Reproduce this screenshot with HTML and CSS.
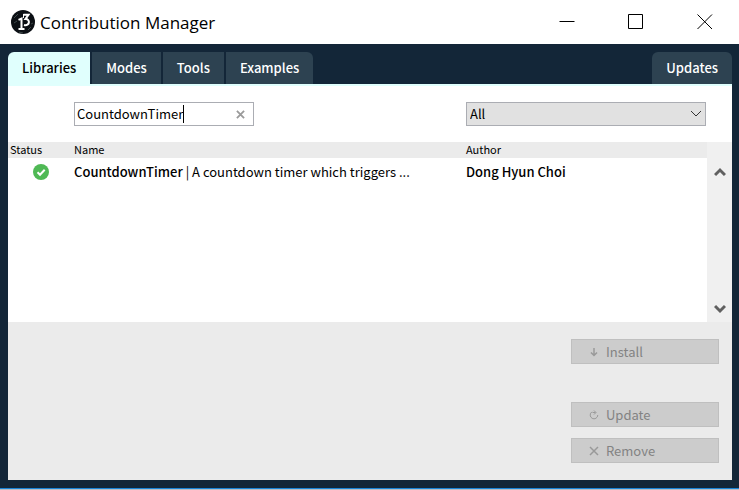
FILE: index.html
```html
<!DOCTYPE html>
<html lang="en">
<head>
<meta charset="utf-8">
<title>Contribution Manager</title>
<link rel="stylesheet" href="styles.css">
</head>
<body>
<header class="titlebar">
  <svg class="logo" viewBox="0 0 24 24" aria-hidden="true">
    <circle cx="12" cy="12" r="12" fill="#0b0f14"/>
    <path d="M3 8l4-4M3 13l3-2M17 20l3-3M20 14l2-1M8 22l4 1" stroke="#3c4748" stroke-width="1" fill="none"/>
    <path d="M7.500 9.800l3-1.300v10M7.500 19h6" stroke="#fff" stroke-width="2" fill="none"/>
    <path d="M12.500 4.800h5l-3 4.200c5-.2 4.500 7.500-1.500 6" stroke="#fff" stroke-width="2" fill="none"/>
    <path d="M12.500 4v4" stroke="#fff" stroke-width="1" fill="none"/>
  </svg>
  <h1 class="title">Contribution Manager</h1>
  <div class="window-controls">
    <button class="window-button" type="button" aria-label="Minimize"><svg viewBox="0 0 16 16"><path d="M.5 7.500h15"/></svg></button>
    <button class="window-button" type="button" aria-label="Maximize"><svg viewBox="0 0 16 16"><path d="M.5.500h14v14H.5z"/></svg></button>
    <button class="window-button" type="button" aria-label="Close"><svg viewBox="0 0 16 16"><path d="M.5.500l14.500 14.500M15 .500L.5 15"/></svg></button>
  </div>
</header>
<main class="frame">
  <nav class="tabs">
    <button class="tab tab-active" type="button">Libraries</button>
    <button class="tab" type="button">Modes</button>
    <button class="tab" type="button">Tools</button>
    <button class="tab tab-last" type="button">Examples</button>
    <button class="tab tab-updates" type="button">Updates</button>
  </nav>
  <section class="panel">
    <div class="filters">
      <div class="search">
        <input class="search-input" type="text" aria-label="Search" value="CountdownTimer">
        <span class="caret"></span>
        <button class="clear" type="button" aria-label="Clear search"><svg viewBox="0 0 10 10"><path d="M1 1l8 8M9 1L1 9"/></svg></button>
      </div>
      <div class="category">
        <select class="category-select" aria-label="Category"><option>All</option></select>
        <svg class="chevron" viewBox="0 0 12 8"><path d="M1 1l5 5 5-5"/></svg>
      </div>
    </div>
    <div class="list">
      <table class="contributions">
        <thead>
          <tr><th class="col-status">Status</th><th>Name</th><th class="col-author">Author</th></tr>
        </thead>
        <tbody>
          <tr>
            <td class="status"><svg class="check" viewBox="0 0 16 16" role="img" aria-label="Installed"><circle cx="8" cy="8" r="8" fill="#4fb955"/><path d="M4.500 8.300l2.500 2.500 4.700-5" stroke="#fff" stroke-width="2" fill="none"/></svg></td>
            <td><b>CountdownTimer</b> | A countdown timer which triggers ...</td>
            <td><b>Dong Hyun Choi</b></td>
          </tr>
        </tbody>
      </table>
      <div class="scrollbar">
        <button class="scroll-button" type="button" aria-label="Scroll up"><svg viewBox="0 0 12 10"><path d="M1 8l5-5 5 5"/></svg></button>
        <button class="scroll-button" type="button" aria-label="Scroll down"><svg viewBox="0 0 12 10"><path d="M1 2l5 5 5-5"/></svg></button>
      </div>
    </div>
    <div class="actions">
      <button class="action action-install" type="button" disabled><svg class="cross" viewBox="0 0 10 10"><path d="M5 1v7.500M2 5.500l3 3 3-3"/></svg>Install</button>
      <button class="action" type="button" disabled><svg class="thin" viewBox="0 0 10 10"><path d="M8.800 5a3.800 3.800 0 1 1-5.800-3.200M3.500 2.500H6.500M5 .500L7 2.500 5 4.500"/></svg>Update</button>
      <button class="action" type="button" disabled><svg class="cross" viewBox="0 0 10 10"><path d="M1 1l8 8M9 1L1 9"/></svg>Remove</button>
    </div>
  </section>
</main>
<div class="desktop-edge"></div>
</body>
</html>
```
FILE: styles.css
```css
* {
  box-sizing: border-box;
}

body {
  margin: 0;
  min-height: 100vh;
  display: flex;
  flex-direction: column;
  background: #fff;
  color: #000;
  font: 13px/20px "Noto Sans CJK SC", sans-serif;
}

button,
input,
select {
  margin: 0;
  padding: 0;
  border: 0;
  border-radius: 0;
  background: none;
  color: inherit;
  font: inherit;
}

svg {
  display: block;
  flex: none;
}

.titlebar {
  display: flex;
  align-items: center;
  height: 44px;
  padding-left: 11px;
}

.logo {
  width: 24px;
  height: 24px;
}

.title {
  flex: 1;
  margin: 0;
  padding: 2px 0 0 5px;
  font: 17px/24px "Open Sans", sans-serif;
}

.window-controls {
  display: flex;
}

.window-button {
  display: flex;
  justify-content: center;
  width: 69px;
}

.window-controls svg {
  width: 16px;
  height: 16px;
  fill: none;
  stroke: #000;
}

.frame {
  flex: 1;
  display: flex;
  flex-direction: column;
  padding: 8px 7px 8px 8px;
  background: #132638;
}

.tabs {
  display: flex;
  gap: 2px;
  height: 32px;
}

.tab {
  padding: 0 14px;
  background: #2d4251;
  color: #fff;
  font-weight: 500;
}

.tab-active {
  border-top-left-radius: 6px;
  background: #e0fffd;
  color: #000;
}

.tab-last {
  border-top-right-radius: 6px;
}

.tab-updates {
  margin-left: auto;
  border-radius: 6px 6px 0 0;
}

.panel {
  flex: 1;
  display: flex;
  flex-direction: column;
  border-top: 2px solid #e0fffd;
  background: #fff;
}

.filters {
  display: flex;
  justify-content: space-between;
  padding: 16px 26px 16px 66px;
}

.search {
  position: relative;
  display: flex;
  width: 180px;
  height: 24px;
  border: 1px solid #abadb3;
}

.search-input {
  flex: 1;
  min-width: 0;
  padding-left: 2px;
  outline: 0;
}

.caret {
  position: absolute;
  top: 2px;
  left: 108px;
  width: 1px;
  height: 18px;
  background: #000;
}

.clear {
  display: flex;
  align-items: center;
  justify-content: center;
  width: 26px;
}

.clear svg {
  width: 9px;
  height: 9px;
  stroke: #9a9a9a;
  stroke-width: 2;
}

.category {
  position: relative;
  width: 240px;
  height: 24px;
}

.category-select {
  width: 100%;
  height: 100%;
  padding-left: 3px;
  border: 1px solid #abadb3;
  background: #e1e1e1;
  appearance: none;
}

.chevron {
  position: absolute;
  top: 8px;
  right: 4px;
  width: 12px;
  height: 8px;
  fill: none;
  stroke: #333;
  pointer-events: none;
}

.list {
  flex: 1;
  display: flex;
  align-items: flex-start;
}

.contributions {
  flex: 1;
  table-layout: fixed;
  border-collapse: collapse;
}

.contributions th {
  height: 16px;
  padding: 0 0 2px;
  background: #ebebeb;
  font-size: 11px;
  font-weight: 400;
  line-height: 14px;
  text-align: left;
}

.contributions .col-status {
  width: 66px;
  padding-left: 2px;
}

.contributions .col-author {
  width: 241px;
}

.contributions td {
  height: 28px;
  padding: 0;
}

.contributions b {
  font-weight: 500;
}

.check {
  width: 16px;
  height: 16px;
  margin: 0 auto;
}

.scrollbar {
  align-self: stretch;
  display: flex;
  flex-direction: column;
  justify-content: space-between;
  width: 25px;
  padding-top: 17px;
  background: #f0f0f0;
}

.scroll-button {
  display: flex;
  align-items: center;
  justify-content: center;
  height: 26px;
}

.scrollbar svg {
  width: 12px;
  height: 10px;
  fill: none;
  stroke: #606060;
  stroke-width: 3;
}

.actions {
  display: flex;
  flex-direction: column;
  align-items: flex-end;
  gap: 11px;
  padding: 17px 13px;
  background: #ebebeb;
}

.action {
  display: flex;
  align-items: center;
  gap: 7px;
  width: 148px;
  height: 25px;
  padding-left: 17px;
  border: 1px solid #bfbfbf;
  background: #ccc;
  color: #838383;
}

.action-install {
  margin-bottom: 27px;
}

.action svg {
  width: 10px;
  height: 10px;
  fill: none;
  stroke: #999;
}

.action .cross {
  stroke-width: 1.5;
}

.action .thin {
  stroke-width: 1;
}

.desktop-edge {
  height: 2px;
  border-top: 1px solid #1883d7;
  background: #b5bec6;
}
```
